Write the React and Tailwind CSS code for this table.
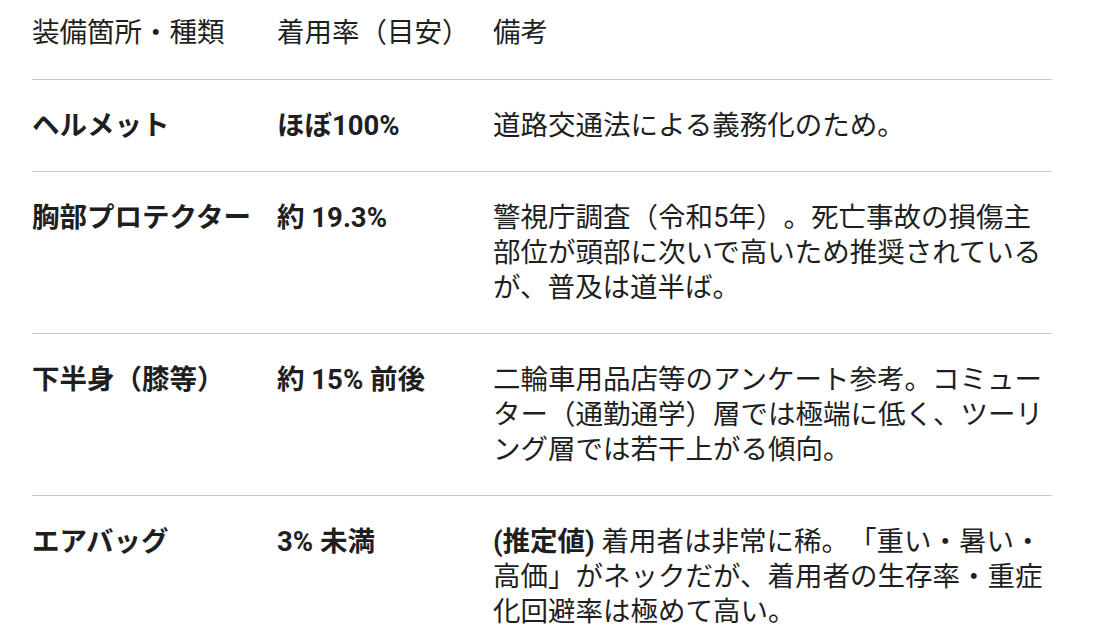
const rows = [
    {
        part: 'ヘルメット',
        rate: 'ほぼ100%',
        note: '道路交通法による義務化のため。',
    },
    {
        part: '胸部プロテクター',
        rate: '約 19.3%',
        note: '警視庁調査（令和5年）。死亡事故の損傷主部位が頭部に次いで高いため推奨されているが、普及は道半ば。',
    },
    {
        part: '下半身（膝等）',
        rate: '約 15% 前後',
        note: '二輪車用品店等のアンケート参考。コミューター（通勤通学）層では極端に低く、ツーリング層では若干上がる傾向。',
    },
    {
        part: 'エアバッグ',
        rate: '3% 未満',
        lead: '(推定値)',
        note: ' 着用者は非常に稀。「重い・暑い・高価」がネックだが、着用者の生存率・重症化回避率は極めて高い。',
    },
];

const App = () => {
    return (
        <div className="min-h-[639px] bg-white pl-[32px] font-['Roboto','Noto_Sans_CJK_JP',sans-serif] text-[27.5px] leading-[35px] text-[#1f1f1f] [text-spacing-trim:space-all]">
            <table className="w-[1020px] table-fixed border-collapse">
                <colgroup>
                    <col className="w-[245px]" />
                    <col className="w-[216px]" />
                    <col />
                </colgroup>
                <thead>
                    <tr className="border-b border-[#c7c7c7]">
                        <th className="pt-[15px] pb-[29px] text-left font-normal align-top">装備箇所・種類</th>
                        <th className="pt-[15px] pb-[29px] text-left font-normal align-top">着用率（目安）</th>
                        <th className="pt-[15px] pb-[29px] text-left font-normal align-top">備考</th>
                    </tr>
                </thead>
                <tbody>
                    {rows.map((row, i) => (
                        <tr key={row.part} className={i > 0 ? 'border-t border-[#c7c7c7]' : ''}>
                            <td className="py-[28px] align-top font-bold whitespace-nowrap">{row.part}</td>
                            <td className="py-[28px] align-top font-bold whitespace-nowrap">{row.rate}</td>
                            <td className="py-[28px] align-top">
                                {row.lead && <span className="font-bold">{row.lead}</span>}
                                {row.note}
                            </td>
                        </tr>
                    ))}
                </tbody>
            </table>
        </div>
    );
};

export default App;
